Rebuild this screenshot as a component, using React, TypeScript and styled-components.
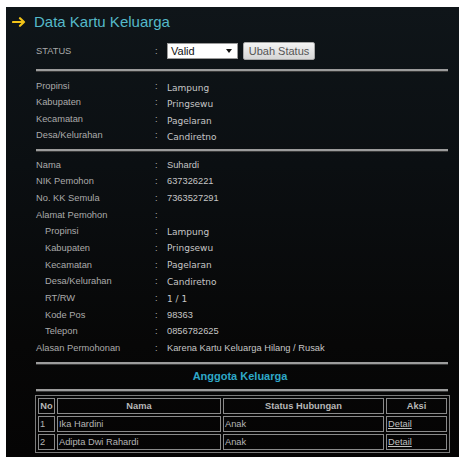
import React from "react";
import styled, { createGlobalStyle } from "styled-components";

const Global = createGlobalStyle`
  html, body { margin: 0; padding: 0; background: #ffffff; }
  body { font-family: "Liberation Sans", Arial, sans-serif; }
`;

const Page = styled.div`
  padding: 7px 0 0 6px;
  height: 457px;
  box-sizing: border-box;
  overflow: hidden;
`;

const Panel = styled.div`
  height: 450px;
  background: linear-gradient(180deg, #0f1519 0%, #0b0f12 35%, #070707 75%, #050404 100%);
  padding: 6px 0 0 6px;
  box-sizing: border-box;
`;

const TitleRow = styled.div`
  display: flex;
  align-items: center;
  gap: 8px;
  height: 18px;
`;

const Title = styled.h1`
  margin: 0;
  font-family: "Liberation Sans", Arial, sans-serif;
  font-weight: normal;
  font-size: 15px;
  line-height: 18px;
  color: #55b9c9;
`;

const Content = styled.div`
  margin: 0 0 0 24px;
  width: 412px;
`;

const StatusRow = styled.div`
  display: grid;
  grid-template-columns: 119px 12px 1fr;
  align-items: center;
  height: 18px;
  margin-top: 11px;
`;

const Label = styled.div<{ $indent?: boolean }>`
  font-size: 9.3px;
  color: #ababab;
  padding-left: ${(p) => (p.$indent ? 9 : 0)}px;
  white-space: nowrap;
`;

const Colon = styled.div`
  font-size: 9.3px;
  color: #ababab;
`;

const Value = styled.div<{ $wide?: boolean; $drop?: number }>`
  font-family: ${(p) =>
    p.$wide ? '"DejaVu Sans", Verdana, sans-serif' : '"Liberation Sans", Arial, sans-serif'};
  font-size: ${(p) => (p.$wide ? 9 : 9.3)}px;
  color: #c6c6c6;
  padding-top: ${(p) => p.$drop ?? 0}px;
  white-space: nowrap;
`;

const Controls = styled.div`
  display: flex;
  align-items: center;
  gap: 5px;
`;

const Select = styled.div`
  width: 71px;
  height: 16px;
  box-sizing: border-box;
  background: #ffffff;
  border: 1px solid #9a9a9a;
  display: flex;
  align-items: center;
  justify-content: space-between;
  padding: 0 5px 0 3px;
  font-size: 11px;
  color: #111;
`;

const Caret = styled.span`
  width: 0;
  height: 0;
  border-left: 3px solid transparent;
  border-right: 3px solid transparent;
  border-top: 4px solid #111;
`;

const Button = styled.div`
  width: 72px;
  height: 18px;
  box-sizing: border-box;
  border: 1px solid #a8a8a8;
  border-radius: 2px;
  background: linear-gradient(180deg, #f4f4f4 0%, #e2e2e2 55%, #d6d6d6 100%);
  display: flex;
  align-items: center;
  justify-content: center;
  font-size: 11px;
  color: #555;
`;

const Rule = styled.div<{ $top: number; $bottom: number }>`
  height: 2px;
  background: #9c9c9c;
  box-shadow: 0 1px 0 #3a3a3a;
  margin: ${(p) => p.$top}px 0 ${(p) => p.$bottom}px;
`;

const Rows = styled.div<{ $pitch: number }>`
  display: grid;
  grid-template-columns: 119px 12px 1fr;
  grid-auto-rows: ${(p) => p.$pitch}px;
  align-items: center;
`;

const SectionTitle = styled.div`
  text-align: center;
  font-weight: bold;
  font-size: 11px;
  color: #2ea8c8;
  height: 14px;
  line-height: 14px;
  padding-right: 4px;
`;

const Table = styled.table`
  width: 413px;
  margin-left: -1px;
  border: 1px solid #7c7c7c;
  border-spacing: 2px;
  table-layout: fixed;
  font-size: 9.3px;
  color: #b5b5b5;
`;

const Th = styled.th`
  height: 14px;
  border: 1px solid #8a8a8a;
  padding: 0;
  font-weight: bold;
  text-align: center;
  color: #b8b8b8;
`;

const Td = styled.td`
  height: 14px;
  border: 1px solid #8a8a8a;
  padding: 0 1px;
  text-align: left;
`;

const Link = styled.span`
  text-decoration: underline;
  color: #c0c0c0;
`;

const Arrow = () => (
  <svg width="14" height="10" viewBox="0 0 14 10">
    <path d="M1 5h11M8 1.2L12 5l-4 3.8" fill="none" stroke="#f2c318" strokeWidth="2.2" strokeLinecap="round" strokeLinejoin="round" />
  </svg>
);

type Item = { label: string; value: string; indent?: boolean; wide?: boolean };

const region: Item[] = [
  { label: "Propinsi", value: "Lampung", wide: true },
  { label: "Kabupaten", value: "Pringsewu", wide: true },
  { label: "Kecamatan", value: "Pagelaran", wide: true },
  { label: "Desa/Kelurahan", value: "Candiretno", wide: true },
];

const applicant: Item[] = [
  { label: "Nama", value: "Suhardi" },
  { label: "NIK Pemohon", value: "637326221" },
  { label: "No. KK Semula", value: "7363527291" },
  { label: "Alamat Pemohon", value: "" },
  { label: "Propinsi", value: "Lampung", indent: true, wide: true },
  { label: "Kabupaten", value: "Pringsewu", indent: true, wide: true },
  { label: "Kecamatan", value: "Pagelaran", indent: true, wide: true },
  { label: "Desa/Kelurahan", value: "Candiretno", indent: true, wide: true },
  { label: "RT/RW", value: "1 / 1", indent: true, wide: true },
  { label: "Kode Pos", value: "98363", indent: true },
  { label: "Telepon", value: "0856782625", indent: true },
  { label: "Alasan Permohonan", value: "Karena Kartu Keluarga Hilang / Rusak" },
];

const members = [
  { no: 1, name: "Ika Hardini", rel: "Anak" },
  { no: 2, name: "Adipta Dwi Rahardi", rel: "Anak" },
];

const renderRows = (items: Item[], drop: number) =>
  items.map((it, i) => (
    <React.Fragment key={i}>
      <Label $indent={it.indent}>{it.label}</Label>
      <Colon>:</Colon>
      <Value $wide={it.wide} $drop={it.wide ? drop : 0}>{it.value}</Value>
    </React.Fragment>
  ));

export default function App() {
  return (
    <Page>
      <Global />
      <Panel>
        <TitleRow>
          <Arrow />
          <Title>Data Kartu Keluarga</Title>
        </TitleRow>
        <Content>
          <StatusRow>
            <Label>STATUS</Label>
            <Colon>:</Colon>
            <Controls>
              <Select>
                Valid
                <Caret />
              </Select>
              <Button>Ubah Status</Button>
            </Controls>
          </StatusRow>
          <Rule $top={9} $bottom={7} />
          <Rows $pitch={16.3}>{renderRows(region, 4)}</Rows>
          <Rule $top={6} $bottom={5} />
          <Rows $pitch={16.7}>{renderRows(applicant, 1)}</Rows>
          <Rule $top={6} $bottom={5} />
          <SectionTitle>Anggota Keluarga</SectionTitle>
          <Rule $top={6} $bottom={4} />
          <Table>
            <colgroup>
              <col style={{ width: 17 }} />
              <col style={{ width: 164 }} />
              <col style={{ width: 161 }} />
              <col style={{ width: 61 }} />
            </colgroup>
            <thead>
              <tr>
                <Th>No</Th>
                <Th>Nama</Th>
                <Th>Status Hubungan</Th>
                <Th>Aksi</Th>
              </tr>
            </thead>
            <tbody>
              {members.map((m) => (
                <tr key={m.no}>
                  <Td>{m.no}</Td>
                  <Td>{m.name}</Td>
                  <Td>{m.rel}</Td>
                  <Td>
                    <Link>Detail</Link>
                  </Td>
                </tr>
              ))}
            </tbody>
          </Table>
        </Content>
      </Panel>
    </Page>
  );
}
